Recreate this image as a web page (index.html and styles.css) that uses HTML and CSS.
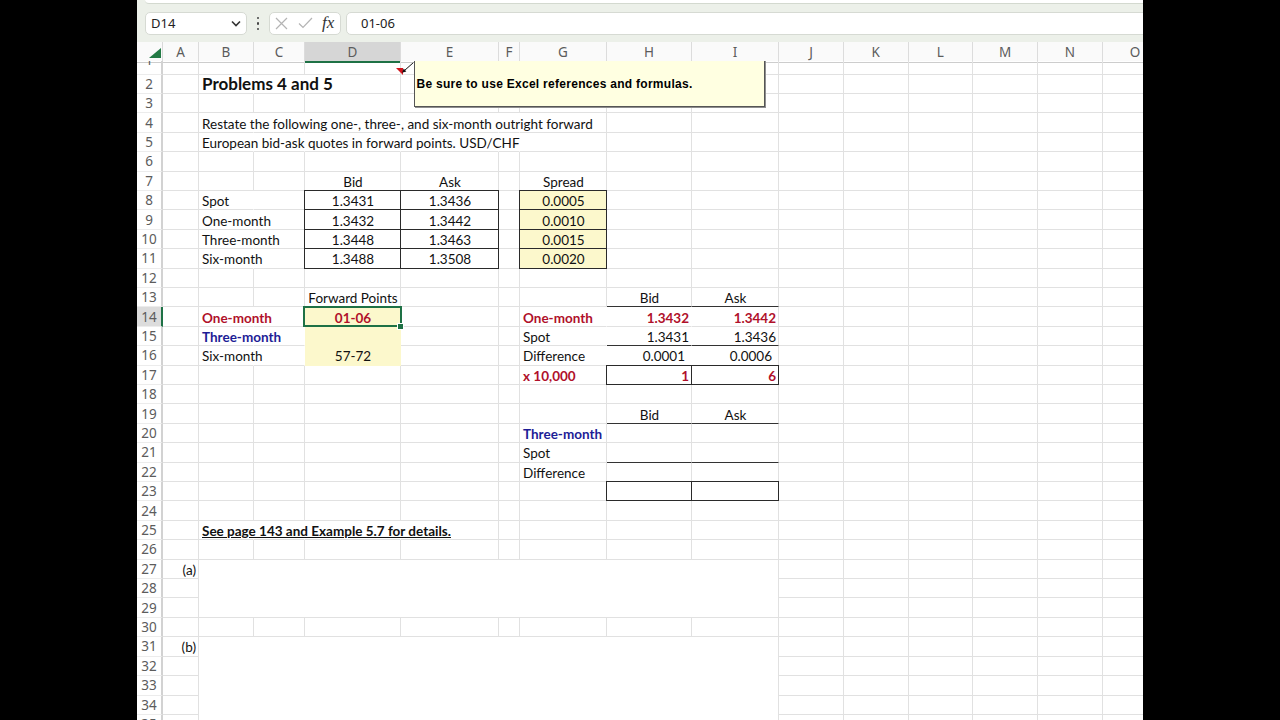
FILE: index.html
```html
<!DOCTYPE html>
<html lang="en">
<head>
    <meta charset="UTF-8">
    <meta name="viewport" content="width=device-width, initial-scale=1.0">
    <title>Problems 4 and 5 - Forward Points</title>
    <link rel="stylesheet" href="styles.css">
</head>
<body>

    <div class="window">

        <!-- Name box + formula bar -->
        <div class="topbar">
            <div class="ribbon-edge"></div>
            <div class="fbar">
                <div class="namebox">
                    <span>D14</span>
                    <svg width="10" height="7" viewBox="0 0 10 7"><path d="M1 1.5 L5 5.5 L9 1.5" fill="none" stroke="#333" stroke-width="1.6"/></svg>
                </div>
                <div class="grip"><i></i><i></i><i></i></div>
                <div class="fnbox">
                    <svg class="ico-x" width="13" height="13" viewBox="0 0 13 13"><path d="M1 1 L12 12 M12 1 L1 12" stroke="#b4b4b4" stroke-width="1.2"/></svg>
                    <svg class="ico-ok" width="15" height="12" viewBox="0 0 15 12"><path d="M1 6.5 L5 10.5 L14 1" fill="none" stroke="#b4b4b4" stroke-width="1.2"/></svg>
                    <span class="fx">fx</span>
                </div>
                <div class="finput">01-06</div>
            </div>
        </div>

        <!-- Column letters -->
        <div class="colhead">
            <div class="corner">
                <svg width="12" height="10" viewBox="0 0 12 10"><polygon points="12,0 12,10 0,10" fill="#237a45"/></svg>
            </div>
            <div class="ch">A</div>
            <div class="ch">B</div>
            <div class="ch">C</div>
            <div class="ch on">D</div>
            <div class="ch">E</div>
            <div class="ch">F</div>
            <div class="ch">G</div>
            <div class="ch">H</div>
            <div class="ch">I</div>
            <div class="ch">J</div>
            <div class="ch">K</div>
            <div class="ch">L</div>
            <div class="ch">M</div>
            <div class="ch">N</div>
            <div class="ch">O</div>
        </div>

        <div class="sheet-wrap">
            <div class="sheet" id="sheet"></div>

            <!-- comment marker and callout -->
            <svg class="note-arrow" width="24" height="16" viewBox="0 0 24 16">
                <polygon points="4,7 11,7 11,14" fill="#d0141c"/>
                <line x1="12.5" y1="9.5" x2="21.3" y2="1.7" stroke="#111" stroke-width="1"/>
                <polygon points="10,11.7 14.3,10.55 11.7,7.55" fill="#111"/>
            </svg>
            <div class="note">Be sure to use Excel references and formulas.</div>
        </div>
    </div>

    <script>
        const COLS = 'ABCDEFGHIJKLMNO';
        const ROWS = 35;

        // text and format of the filled cells
        const cells = {
            B2: ['Problems 4 and 5', 'title'],
            B4: ['Restate the following one-, three-, and six-month outright forward'],
            B5: ['European bid-ask quotes in forward points. USD/CHF'],

            D7: ['Bid', 'ctr'], E7: ['Ask', 'ctr'], G7: ['Spread', 'ctr'],
            B8: ['Spot'], D8: ['1.3431', 'ctr box'], E8: ['1.3436', 'ctr box'], G8: ['0.0005', 'ctr fill box'],
            B9: ['One-month'], D9: ['1.3432', 'ctr box'], E9: ['1.3442', 'ctr box'], G9: ['0.0010', 'ctr fill box'],
            B10: ['Three-month'], D10: ['1.3448', 'ctr box'], E10: ['1.3463', 'ctr box'], G10: ['0.0015', 'ctr fill box'],
            B11: ['Six-month'], D11: ['1.3488', 'ctr box'], E11: ['1.3508', 'ctr box'], G11: ['0.0020', 'ctr fill box'],

            D13: ['Forward Points', 'ctr'], H13: ['Bid', 'ctr bb'], I13: ['Ask', 'ctr bb'],
            B14: ['One-month', 'b red'], D14: ['01-06', 'ctr b red fill sel'],
            G14: ['One-month', 'b red'], H14: ['1.3432', 'num b red'], I14: ['1.3442', 'num b red'],
            B15: ['Three-month', 'b navy'], D15: ['', 'fill'],
            G15: ['Spot'], H15: ['1.3431', 'num bb'], I15: ['1.3436', 'num bb'],
            B16: ['Six-month'], D16: ['57-72', 'ctr fill'],
            G16: ['Difference'], H16: ['0.0001', 'num pad'], I16: ['0.0006', 'num pad'],
            G17: ['x 10,000', 'b red'], H17: ['1', 'num b red box'], I17: ['6', 'num b red box'],

            H19: ['Bid', 'ctr bb'], I19: ['Ask', 'ctr bb'],
            G20: ['Three-month', 'b navy'],
            G21: ['Spot'], H21: ['', 'bb'], I21: ['', 'bb'],
            G22: ['Difference'],
            H23: ['', 'box'], I23: ['', 'box'],

            B25: ['See page 143 and Example 5.7 for details.', 'b u'],
            A27: ['(a)', 'num'],
            A31: ['(b)', 'num']
        };

        // rows where text runs over the next cell, so the gridline is not drawn
        const openRight = {
            2: 'BC', 4: 'BCDEF', 5: 'BCDEF',
            8: 'B', 9: 'B', 10: 'B', 11: 'B',
            14: 'BCGH', 15: 'BCGH', 16: 'BCGH',
            25: 'BCD'
        };

        // merged answer areas: [columns, rows]
        const merges = { B27: [8, 3], B31: [8, 5] };

        const covered = new Set();
        for (const addr in merges) {
            const [w, h] = merges[addr];
            const c0 = COLS.indexOf(addr[0]);
            const r0 = parseInt(addr.slice(1));
            for (let r = r0; r < r0 + h; r++) {
                for (let c = c0; c < c0 + w; c++) {
                    if (r !== r0 || c !== c0) covered.add(COLS[c] + r);
                }
            }
        }

        const sheet = document.getElementById('sheet');
        for (let r = 1; r <= ROWS; r++) {
            const head = document.createElement('div');
            head.className = 'rh' + (r === 1 ? ' first' : '') + (r === 14 ? ' on' : '');
            head.innerHTML = '<span>' + r + '</span>';
            sheet.appendChild(head);

            for (const col of COLS) {
                const addr = col + r;
                if (covered.has(addr)) continue;
                const [text, cls] = cells[addr] || ['', ''];
                const el = document.createElement('div');
                el.className = 'cell' + (cls ? ' ' + cls : '');
                if ((openRight[r] || '').includes(col)) el.classList.add('open');
                if (merges[addr]) {
                    el.style.gridColumn = 'span ' + merges[addr][0];
                    el.style.gridRow = 'span ' + merges[addr][1];
                }
                if (text) el.innerHTML = '<span>' + text + '</span>';
                sheet.appendChild(el);
            }
        }
    </script>

</body>
</html>
```

FILE: styles.css
```css
body {
    margin: 0;
    background-color: #000;
    display: flex;
    justify-content: center;
    font-family: 'Lato', sans-serif;
}

.window {
    width: 1006px;
    height: 720px;
    display: flex;
    flex-direction: column;
    background-color: #fff;
    overflow: hidden;
}

/* ---------- formula bar ---------- */
.topbar {
    height: 41.5px;
    flex-shrink: 0;
    background-color: #ecf0e9;
    box-sizing: border-box;
}

.ribbon-edge {
    height: 3px;
    margin-left: 8px;
    background-color: #fff;
    border-bottom: 1px solid #d3d9cf;
    border-radius: 0 0 0 6px;
}

.fbar {
    display: flex;
    height: 23.5px;
    margin-top: 7.5px;
    padding-left: 8px;
    font-family: 'Noto Sans', sans-serif;
    font-size: 13px;
    color: #222;
}

.namebox,
.fnbox,
.finput {
    background-color: #fff;
    border: 1px solid #d6dad3;
    border-radius: 5px;
    box-sizing: border-box;
    display: flex;
    align-items: center;
}

.namebox {
    width: 102px;
    justify-content: space-between;
    padding: 0 5px 0 5px;
}

.grip {
    width: 22px;
    display: flex;
    flex-direction: column;
    align-items: center;
    justify-content: center;
    gap: 3px;
}

.grip i {
    width: 2.5px;
    height: 2.5px;
    border-radius: 50%;
    background-color: #444;
}

.fnbox {
    width: 72px;
    padding-left: 5px;
}

.ico-ok {
    margin-left: 10px;
}

.fx {
    margin-left: 9px;
    font-family: 'Liberation Serif', serif;
    font-style: italic;
    font-size: 17px;
    color: #333;
}

.finput {
    flex: 1;
    margin-left: 5px;
    margin-right: -10px;
    padding-left: 14px;
}

/* ---------- column header ---------- */
.colhead,
.sheet {
    display: grid;
    grid-template-columns: 26px 36px 55px 51px 96px 98px 21px 87px 85px 87px 65px 64.5px 64.5px 65px 65px 65px;
}

.colhead {
    height: 19.5px;
    flex-shrink: 0;
    background-color: #fafafa;
    font-family: 'Noto Sans', sans-serif;
    font-size: 13.5px;
    color: #5c5c5c;
}

.corner {
    display: flex;
    align-items: flex-end;
    justify-content: flex-end;
    padding: 0 1px 3.5px 0;
    border-right: 1px solid #d9d9d9;
    border-bottom: 1px solid #cdcdcd;
}

.ch {
    display: flex;
    align-items: center;
    justify-content: center;
    padding-top: 1px;
    border-right: 1px solid #dcdcdc;
    border-bottom: 1px solid #cdcdcd;
}

.ch.on {
    background-color: #d6d6d6;
    border-bottom: 2px solid #1e7145;
}

/* ---------- grid ---------- */
.sheet-wrap {
    position: relative;
    flex: 1;
    overflow: hidden;
}

.sheet {
    grid-template-rows: 13.5px repeat(34, 19.42px);
}

.sheet > div {
    box-sizing: border-box;
}

.rh {
    display: flex;
    align-items: center;
    justify-content: center;
    overflow: hidden;
    border-right: 2px solid #d2d2d2;
    border-bottom: 1px solid #ececec;
    font-family: 'Noto Sans', sans-serif;
    font-size: 13.5px;
    color: #5c5c5c;
}

.rh.first span {
    margin-top: -15px;
}

.rh.on {
    background-color: #dcdcdc;
    border-right-color: #1e7145;
}

.cell {
    display: flex;
    align-items: center;
    padding: 2px 2px 0 3px;
    min-width: 0;
    white-space: nowrap;
    border-right: 1px solid #e1e1e1;
    border-bottom: 1px solid #e1e1e1;
    font-size: 13.5px;
    color: #111;
}

.ctr { justify-content: center; }
.num { justify-content: flex-end; }
.pad { padding-right: 6px; }

.title {
    padding-top: 0;
    padding-bottom: 1px;
    font-size: 17px;
    font-weight: 700;
}

.b { font-weight: 700; }
.u { text-decoration: underline; }
.red { color: #b0102a; }
.navy { color: #1d1d96; }

.fill {
    background-color: #fcf8cc;
    border-color: #fcf8cc;
}

.open { border-right-color: transparent; }
.bb { border-bottom-color: #333; }

.box {
    border: 1px solid #2a2a2a;
    margin: -1px 0 0 -1px;
}

.sel {
    position: relative;
}

.sel::after {
    content: '';
    position: absolute;
    top: -1px;
    left: -2px;
    right: -2px;
    bottom: -1px;
    border: 2px solid #1e7145;
}

.sel::before {
    content: '';
    position: absolute;
    right: -4px;
    bottom: -4px;
    width: 5px;
    height: 5px;
    background-color: #1e7145;
    border: 1px solid #fff;
    z-index: 1;
}

/* ---------- comment ---------- */
.note-arrow {
    position: absolute;
    left: 255px;
    top: 0;
}

.note {
    position: absolute;
    left: 276.5px;
    top: -6px;
    width: 351.5px;
    height: 52px;
    box-sizing: border-box;
    display: flex;
    align-items: center;
    padding: 6px 0 0 2px;
    background-color: #ffffe1;
    border: 1px solid #555;
    box-shadow: 1px 1px 0 #8f8f8f;
    font-family: 'Liberation Sans', sans-serif;
    font-size: 12px;
    letter-spacing: 0.28px;
    font-weight: 700;
    color: #000;
}
```
